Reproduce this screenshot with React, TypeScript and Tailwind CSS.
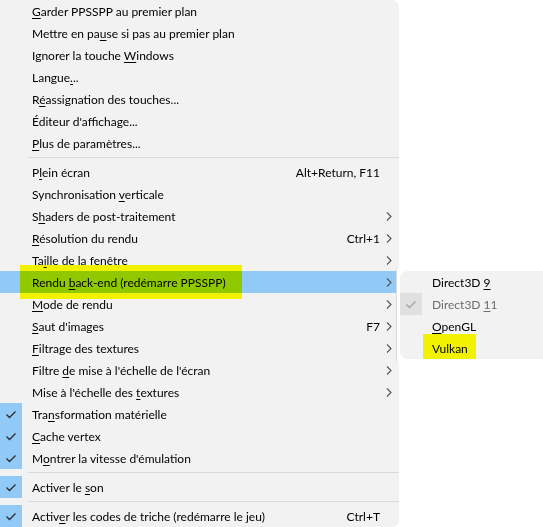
import React from "react";

type Item =
  | { sep: true }
  | {
      sep?: false;
      label: string;
      shortcut?: string;
      arrow?: boolean;
      checked?: boolean;
      hover?: boolean;
    };

const items: Item[] = [
  { label: "&Garder PPSSPP au premier plan" },
  { label: "Mettre en pa&use si pas au premier plan" },
  { label: "Ignorer la touche &Windows" },
  { label: "Langue&..." },
  { label: "R&éassignation des touches..." },
  { label: "Éditeur d'affichage..." },
  { label: "&Plus de paramètres..." },
  { sep: true },
  { label: "P&lein écran", shortcut: "Alt+Return, F11" },
  { label: "Synchronisation &verticale" },
  { label: "S&haders de post-traitement", arrow: true },
  { label: "&Résolution du rendu", shortcut: "Ctrl+1", arrow: true },
  { label: "Ta&ille de la fenêtre", arrow: true },
  { label: "Rendu &back-end (redémarre PPSSPP)", arrow: true, hover: true },
  { label: "&Mode de rendu", arrow: true },
  { label: "&Saut d'images", shortcut: "F7", arrow: true },
  { label: "&Filtrage des textures", arrow: true },
  { label: "Filtre &de mise à l'échelle de l'écran", arrow: true },
  { label: "Mise à l'échelle des &textures", arrow: true },
  { label: "Tra&nsformation matérielle", checked: true },
  { label: "&Cache vertex", checked: true },
  { label: "M&ontrer la vitesse d'émulation", checked: true },
  { sep: true },
  { label: "Activer le &son", checked: true },
  { sep: true },
  {
    label: "Activ&er les codes de triche (redémarre le jeu)",
    shortcut: "Ctrl+T",
    checked: true,
  },
];

function Label({ text }: { text: string }) {
  const i = text.indexOf("&");
  if (i < 0) return <>{text}</>;
  return (
    <>
      {text.slice(0, i)}
      <span className="underline underline-offset-[2px] decoration-1">
        {text[i + 1]}
      </span>
      {text.slice(i + 2)}
    </>
  );
}

function Check({ color = "#2b2b2b" }: { color?: string }) {
  return (
    <svg width="22" height="22" viewBox="0 0 22 22">
      <path
        d="M6.5 11.5 L9.5 14.5 L15.5 8.5"
        fill="none"
        stroke={color}
        strokeWidth="1.3"
      />
    </svg>
  );
}

function Chevron() {
  return (
    <svg width="6" height="9" viewBox="0 0 6 9">
      <path d="M1 0.5 L5 4.5 L1 8.5" fill="none" stroke="#555" strokeWidth="1.1" />
    </svg>
  );
}

export default function App() {
  return (
    <div
      className="relative w-[543px] h-[527px] bg-white overflow-hidden text-[12px] text-black"
      style={{ fontFamily: 'Lato, "Noto Sans", sans-serif' }}
    >
      <div className="w-[399px] h-[527px] bg-[#f2f2f2] rounded-tr-[7px] rounded-br-[7px] flex flex-col">
        {items.map((it, idx) =>
          it.sep ? (
            <div key={idx} className="h-[7px] flex items-center pl-[28px]">
              <div className="h-px w-full bg-[#d9d9d9]" />
            </div>
          ) : (
            <div
              key={idx}
              className={`h-[22px] mr-[3px] flex items-center ${
                it.hover ? "bg-[#91c9f7]" : ""
              }`}
            >
              <div
                className={`w-[22px] h-[22px] shrink-0 ${
                  it.checked ? "bg-[#91c9f7]" : ""
                }`}
              >
                {it.checked && <Check />}
              </div>
              <div className="flex-1 pl-[10px] pt-[1px] whitespace-nowrap leading-none">
                <Label text={it.label} />
              </div>
              {it.shortcut && (
                <div className="pt-[1px] whitespace-nowrap leading-none">{it.shortcut}</div>
              )}
              <div className="w-[16px] h-[22px] flex items-center pl-[6px]">
                {it.arrow && <Chevron />}
              </div>
            </div>
          )
        )}
      </div>

      {/* Submenu */}
      <div className="absolute left-[396px] top-[268px] w-[147px] h-[93px] border-l border-[#dcdcdc] bg-white">
        <div className="absolute left-[3px] top-[3px] w-[150px] h-[88px] bg-[#f2f2f2] rounded-[8px] flex flex-col">
          {[
            { label: "Direct3D &9" },
            { label: "Direct3D &11", disabled: true },
            { label: "&OpenGL" },
            { label: "Vulkan" },
          ].map((s, i) => (
            <div key={i} className="h-[22px] flex items-center">
              <div
                className={`w-[22px] h-[22px] shrink-0 ${
                  s.disabled ? "bg-[#e0e0e0]" : ""
                }`}
              >
                {s.disabled && <Check color="#a3a3a3" />}
              </div>
              <div
                className={`pl-[10px] pt-[1px] whitespace-nowrap leading-none ${
                  s.disabled ? "text-[#6d6d6d]" : ""
                }`}
              >
                <Label text={s.label} />
              </div>
            </div>
          ))}
        </div>
      </div>

      {/* Highlighter marks */}
      <div className="absolute left-[20px] top-[265px] w-[222px] h-[34px] bg-[#ffff00] mix-blend-multiply" />
      <div className="absolute left-[423px] top-[334px] w-[53px] h-[25px] bg-[#ffff00] mix-blend-multiply" />
    </div>
  );
}
